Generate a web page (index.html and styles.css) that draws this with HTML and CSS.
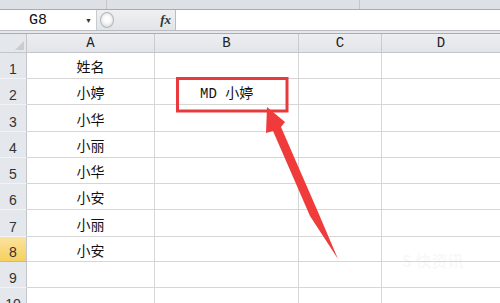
FILE: index.html
```html
<!DOCTYPE html>
<html lang="zh-CN">

<head>
    <meta charset="UTF-8">
    <title>Excel</title>
    <link rel="stylesheet" href="styles.css">
</head>

<body>
    <div class="window">

        <!-- ribbon alt kenari -->
        <div class="ribbon-edge">
            <div class="ribbon-part" style="width: 106px"></div>
            <div class="ribbon-part" style="width: 252px"></div>
            <div class="ribbon-part last"></div>
        </div>

        <!-- formul cubugu -->
        <div class="formula-bar">
            <div class="name-box">
                <span class="cell-ref">G8</span>
                <span class="drop">&#9660;</span>
            </div>
            <div class="fx-area">
                <span class="knob"></span>
                <span class="fx"><i>f</i>x</span>
            </div>
            <div class="formula-input"></div>
        </div>

        <div class="gap"></div>

        <!-- tablo -->
        <div class="sheet">
            <div class="corner"><span class="tri"></span></div>
            <div class="col-head">A</div>
            <div class="col-head">B</div>
            <div class="col-head">C</div>
            <div class="col-head last">D</div>

            <div class="row-head">1</div>
            <div class="cell center">姓名</div>
            <div class="cell"></div>
            <div class="cell"></div>
            <div class="cell last"></div>

            <div class="row-head">2</div>
            <div class="cell center">小婷</div>
            <div class="cell value">MD 小婷</div>
            <div class="cell"></div>
            <div class="cell last"></div>

            <div class="row-head">3</div>
            <div class="cell center">小华</div>
            <div class="cell"></div>
            <div class="cell"></div>
            <div class="cell last"></div>

            <div class="row-head">4</div>
            <div class="cell center">小丽</div>
            <div class="cell"></div>
            <div class="cell"></div>
            <div class="cell last"></div>

            <div class="row-head">5</div>
            <div class="cell center">小华</div>
            <div class="cell"></div>
            <div class="cell"></div>
            <div class="cell last"></div>

            <div class="row-head">6</div>
            <div class="cell center">小安</div>
            <div class="cell"></div>
            <div class="cell"></div>
            <div class="cell last"></div>

            <div class="row-head">7</div>
            <div class="cell center">小丽</div>
            <div class="cell"></div>
            <div class="cell"></div>
            <div class="cell last"></div>

            <div class="row-head active">8</div>
            <div class="cell center">小安</div>
            <div class="cell"></div>
            <div class="cell"></div>
            <div class="cell last"></div>

            <div class="row-head">9</div>
            <div class="cell"></div>
            <div class="cell"></div>
            <div class="cell"></div>
            <div class="cell last"></div>

            <div class="row-head">10</div>
            <div class="cell"></div>
            <div class="cell"></div>
            <div class="cell"></div>
            <div class="cell last"></div>
        </div>

        <div class="watermark">S 快资讯</div>

        <!-- isaretler -->
        <svg class="marks" width="500" height="303" viewBox="0 0 500 303">
            <rect x="177.5" y="78.5" width="109.5" height="32.5" fill="none" stroke="#e8393c" stroke-width="3" />
            <polygon points="267,107 285,122 281,127 318,212 338,259 310,216 273,131 266,133" fill="#f03b3b" />
        </svg>
    </div>
</body>

</html>
```

FILE: styles.css
```css
body {
    margin: 0;
    font-family: "Liberation Sans", "Noto Sans CJK SC", sans-serif;
    background-color: #fff;
}

.window {
    position: relative;
    width: 500px;
    height: 303px;
    overflow: hidden;
}

.ribbon-edge {
    display: flex;
    height: 9px;
    background-color: #dde1e6;
    border-bottom: 1px solid #a7abb0;
}

    .ribbon-part {
        border-right: 1px solid #c3c7cc;
    }

        .ribbon-part.last {
            flex: 1;
            border-right: none;
        }

.formula-bar {
    display: flex;
    height: 20px;
    border-bottom: 1px solid #b9bdc2;
}

.name-box {
    width: 96px;
    display: flex;
    align-items: center;
    background-color: #fff;
    box-sizing: border-box;
}

    .name-box .cell-ref {
        margin-left: 29px;
        font-family: "Liberation Mono", monospace;
        font-size: 15px;
        color: #111;
    }

    .name-box .drop {
        margin-left: auto;
        margin-right: 4px;
        font-size: 7px;
        color: #333;
    }

.fx-area {
    width: 80px;
    display: flex;
    align-items: center;
    background: linear-gradient(#eef0f2, #e2e5e8);
    border-left: 1px solid #c8cbcf;
    border-right: 1px solid #b9bdc2;
    box-sizing: border-box;
}

    .fx-area .knob {
        width: 14px;
        height: 16px;
        margin-left: 3px;
        border-radius: 50%;
        border: 1px solid #b3b7bb;
        background: radial-gradient(circle at 50% 45%, #fdfdfd 30%, #d9dcdf 80%);
        box-sizing: border-box;
    }

    .fx-area .fx {
        margin-left: auto;
        margin-right: 4px;
        font-family: "Liberation Serif", serif;
        font-weight: bold;
        font-style: italic;
        font-size: 13px;
        color: #333;
    }

.formula-input {
    flex: 1;
    background-color: #fff;
}

.gap {
    height: 2px;
    background-color: #e6e9ec;
    border-bottom: 1px solid #a9adb2;
}

.sheet {
    display: grid;
    grid-template-columns: 27px 128px 144px 83px 1fr;
    grid-template-rows: 19px 26px 26px 27px 26px 26px 26px 27px 25px 26px 26px;
}

.corner {
    position: relative;
    background-color: #e4e7eb;
    border-right: 1px solid #c2c6cb;
    border-bottom: 1px solid #c2c6cb;
}

    .corner .tri {
        position: absolute;
        right: 2px;
        bottom: 2px;
        width: 0;
        height: 0;
        border-left: 9px solid transparent;
        border-bottom: 9px solid #c9ccd0;
    }

.col-head {
    display: flex;
    justify-content: center;
    align-items: center;
    background: linear-gradient(#eceef1, #e2e5e9);
    border-right: 1px solid #c7cbd0;
    border-bottom: 1px solid #c2c6cb;
    font-family: "Liberation Mono", monospace;
    font-size: 14px;
    color: #222;
}

    .col-head.last {
        border-right: none;
    }

.row-head {
    display: flex;
    justify-content: center;
    align-items: flex-end;
    padding-bottom: 1px;
    background-color: #e4e7eb;
    border-right: 1px solid #c2c6cb;
    border-bottom: 1px solid #f2f3f5;
    box-sizing: border-box;
    font-size: 14px;
    color: #333;
}

    .row-head.active {
        background: linear-gradient(#fbe3a0, #f7cf5c);
        border-bottom: 1px solid #e8b840;
    }

.cell {
    display: flex;
    align-items: center;
    border-right: 1px solid #d6d6d6;
    border-bottom: 1px solid #d6d6d6;
    box-sizing: border-box;
    font-family: "Noto Sans CJK SC", sans-serif;
    font-size: 14px;
    color: #111;
}

    .cell.last {
        border-right: none;
    }

    .cell.center {
        justify-content: center;
        padding-top: 1px;
    }

    .cell.value {
        padding-left: 45px;
        padding-top: 1px;
        font-family: "Liberation Mono", "Noto Sans CJK SC", monospace;
    }

.watermark {
    position: absolute;
    left: 402px;
    top: 248px;
    font-family: "Noto Sans CJK SC", sans-serif;
    font-size: 16px;
    font-weight: bold;
    color: rgba(200, 200, 200, 0.12);
}

.marks {
    position: absolute;
    top: 0;
    left: 0;
    pointer-events: none;
}
```
